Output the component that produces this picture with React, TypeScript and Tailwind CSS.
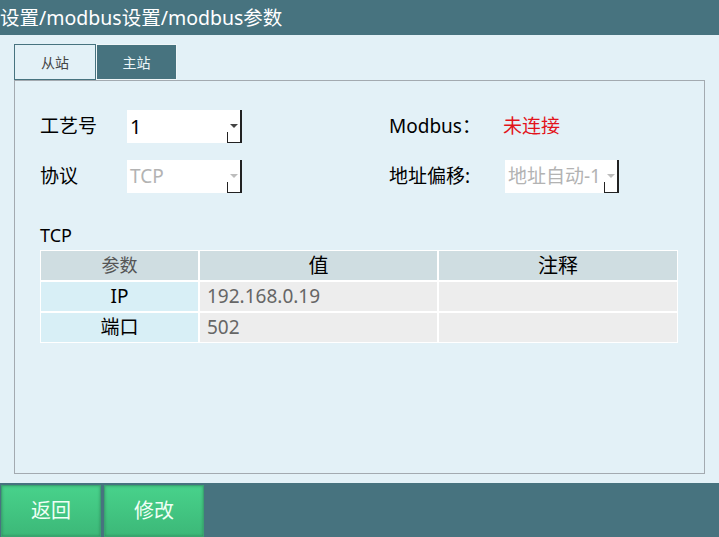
import React from 'react'

const font = { fontFamily: '"Noto Sans", "Noto Sans CJK SC", sans-serif' }

function Select({ value, disabled, width = 'w-[115px]' }: { value: string; disabled?: boolean; width?: string }) {
  return (
    <div className={`relative h-[33px] ${width} bg-white`}>
      <div
        className={`absolute left-[3px] top-0 h-full flex items-center whitespace-nowrap ${
          disabled ? 'text-[#b3b3b3] text-[19px]' : 'text-black text-[20px]'
        }`}
      >
        {value}
      </div>
      <div className="absolute right-0 top-0 h-full w-[2px] bg-[#222]" />
      <div className="absolute right-0 bottom-0 w-[15px] h-[11px] border-l border-b border-[#222]" />
      <div
        className={`absolute right-[4px] top-[14px] w-0 h-0 border-l-[4px] border-r-[4px] border-t-[4px] border-l-transparent border-r-transparent ${
          disabled ? 'border-t-[#bdbdbd]' : 'border-t-[#444]'
        }`}
      />
    </div>
  )
}

export default function App() {
  return (
    <div className="w-[719px] h-[537px] flex flex-col bg-[#e3f1f7] overflow-hidden" style={font}>
      {/* header */}
      <div className="h-[35px] bg-[#47737f] flex items-center text-white text-[19.5px] leading-none">
        设置/modbus设置/modbus参数
      </div>

      {/* body */}
      <div className="flex-1 flex flex-col px-[14px] pt-[9px] pb-[9px]">
        <div className="flex h-[37px]">
          <div className="w-[82px] h-[36px] border border-[#47737f] flex items-center justify-center text-[14px] text-[#444]">
            从站
          </div>
          <div className="w-[81px] h-[36px] bg-[#47737f] border border-[#f0f6f8] flex items-center justify-center text-[14px] text-[#eef6f8]">
            主站
          </div>
        </div>
        <div className="flex-1 border border-[#a3aab0] -mt-[1px] pl-[25px] pr-[24px] pt-[29px]">
          <div className="flex items-center">
            <div className="w-[349px] flex items-center">
              <div className="w-[87px] text-[19px] text-black">工艺号</div>
              <Select value="1" />
            </div>
            <div className="flex items-center">
              <div className="w-[114px] text-[19px] text-black">Modbus：</div>
              <div className="text-[19px] text-[#e2141b]">未连接</div>
            </div>
          </div>
          <div className="flex items-center mt-[17px]">
            <div className="w-[349px] flex items-center">
              <div className="w-[87px] text-[19px] text-black">协议</div>
              <Select value="TCP" disabled />
            </div>
            <div className="flex items-center">
              <div className="w-[116px] text-[19px] text-black">地址偏移:</div>
              <Select value="地址自动-1" disabled width="w-[114px]" />
            </div>
          </div>

          <div className="mt-[30px] text-[18px] text-black leading-[24px]">TCP</div>
          <div className="mt-[3px] w-[638px] grid grid-cols-[157px_237px_238px] gap-[2px] border-[1px] border-white bg-white">
            <div className="h-[29px] bg-[#cfdde1] flex items-center justify-center text-[18px] text-[#555]">参数</div>
            <div className="h-[29px] bg-[#cfdde1] flex items-center justify-center text-[20px] text-black">值</div>
            <div className="h-[29px] bg-[#cfdde1] flex items-center justify-center text-[20px] text-black">注释</div>

            <div className="h-[29px] bg-[#d8eff6] flex items-center justify-center text-[19px] text-black">IP</div>
            <div className="h-[29px] bg-[#ededed] flex items-center pl-[7px] text-[19px] text-[#666]">192.168.0.19</div>
            <div className="h-[29px] bg-[#ededed]" />

            <div className="h-[29px] bg-[#d8eff6] flex items-center justify-center text-[19px] text-black">端口</div>
            <div className="h-[29px] bg-[#ededed] flex items-center pl-[7px] text-[19px] text-[#666]">502</div>
            <div className="h-[29px] bg-[#ededed]" />
          </div>
        </div>
      </div>

      {/* footer */}
      <div className="h-[54px] bg-[#47737f] flex items-end gap-[3px] pl-[1px]">
        <button className="w-[100px] h-[52px] bg-gradient-to-b from-[#48d28b] to-[#3cb878] border border-[#3aa371] shadow-[inset_0_0_3px_rgba(0,0,0,0.25)] text-[20px] text-[#effff5] flex items-center justify-center">
          返回
        </button>
        <button className="w-[100px] h-[52px] bg-gradient-to-b from-[#48d28b] to-[#3cb878] border border-[#3aa371] shadow-[inset_0_0_3px_rgba(0,0,0,0.25)] text-[20px] text-[#effff5] flex items-center justify-center">
          修改
        </button>
      </div>
    </div>
  )
}
